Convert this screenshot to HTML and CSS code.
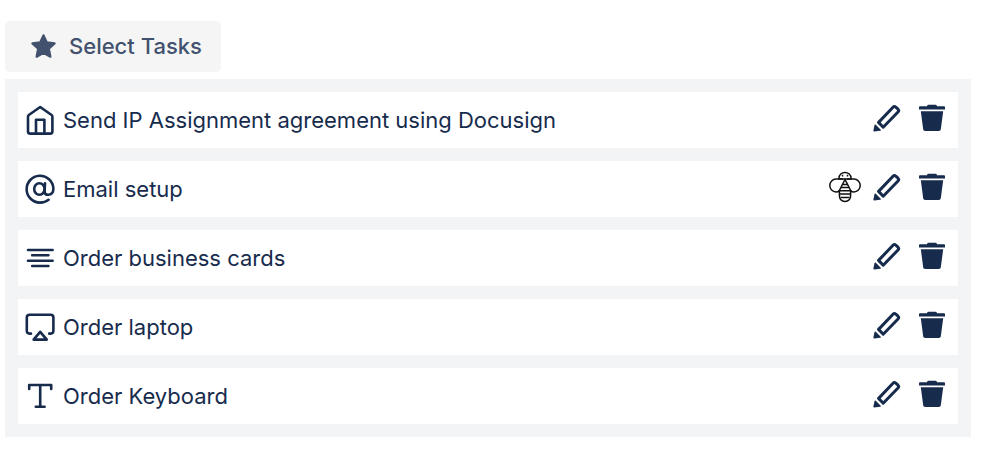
FILE: index.html
```
<!DOCTYPE html>
<html lang="en">
<head>
  <meta charset="UTF-8" />
  <meta name="viewport" content="width=device-width, initial-scale=1.0"/>
  <title>Select Tasks</title>
  <link rel="stylesheet" href="styles.css">
</head>
<body>

  <!-- shared icons -->
  <svg class="sprite" aria-hidden="true">
    <symbol id="edit" viewBox="0 0 28 28">
      <path d="M5.6 18.4 L20 3.2 Q21.4 1.8 22.8 3.2 L25 5.2 Q26.4 6.6 25 8 L10.2 23.2 Z" fill="none" stroke="currentColor" stroke-width="3" stroke-linejoin="round"/>
      <path d="M2.6 20.4 L8.2 26.2 L7 26.8 L1.2 27.6 Q.3 27.6 .4 26.6 L1.6 20.8 Z" fill="currentColor"/>
    </symbol>
    <symbol id="trash" viewBox="0 0 28 28">
      <path d="M2 2.2 H9 Q9.3 .8 10.6 .8 H17.4 Q18.7 .8 19 2.2 H26 Q27 2.2 27 3.2 V5.6 H1 V3.2 Q1 2.2 2 2.2 Z" fill="currentColor"/>
      <path d="M2.8 7.2 H25.2 L22.8 25.2 Q22.5 27 20.8 27 H7.2 Q5.5 27 5.2 25.2 Z" fill="currentColor"/>
    </symbol>
  </svg>

  <button class="select-btn" type="button">
    <svg viewBox="0 0 28 28"><path d="M14 2.5 L17.4 9.8 L25.5 10.8 L19.5 16.3 L21.1 24.5 L14 20.5 L6.9 24.5 L8.5 16.3 L2.5 10.8 L10.6 9.8 Z" fill="currentColor" stroke="currentColor" stroke-width="2.4" stroke-linejoin="round"/></svg>
    Select Tasks
  </button>

  <ul class="task-list">
    <li class="task">
      <svg class="task-icon" viewBox="0 0 30 30">
        <path d="M3 11.6 Q3 10.6 3.8 10 L15.2 2 L26.6 10 Q27.4 10.6 27.4 11.6 V26.5 Q27.4 28.6 25.3 28.6 H5.1 Q3 28.6 3 26.5 Z"/>
        <path d="M11 28.4 V14.8 H19.4 V28.4"/>
      </svg>
      <span class="task-name">Send IP Assignment agreement using Docusign</span>
      <div class="actions">
        <button type="button" aria-label="Edit"><svg><use href="#edit"/></svg></button>
        <button type="button" aria-label="Delete"><svg><use href="#trash"/></svg></button>
      </div>
    </li>
    <li class="task">
      <svg class="task-icon" viewBox="0 0 30 30">
        <ellipse cx="14.4" cy="15" rx="5.2" ry="5.8"/>
        <path d="M20 9.2 L19.6 17.4 Q19.6 20.8 23 20.8 Q28.4 20.3 28.4 14.4 A13.4 13.4 0 1 0 15 28.6 Q20 28.6 23.6 25.8"/>
      </svg>
      <span class="task-name">Email setup</span>
      <div class="actions">
        <svg class="bee" viewBox="0 0 32 32">
          <path d="M10 8 V7 A6 5.6 0 0 1 22 7 V8 Z"/>
          <path d="M14 8 H7 A6.2 6.5 0 0 0 7 21 Q9.4 21 10.4 19.5 M18 8 H25 A6.2 6.5 0 0 1 25 21 Q22.6 21 21.6 19.5"/>
          <path d="M16 8.5 L10.4 19.5 V24.5 Q10.4 30.4 16 30.4 Q21.6 30.4 21.6 24.5 V19.5 Z"/>
          <path d="M13.5 13.5 H18.5 M12 16.6 H20 M10.5 19.8 H21.5 M10.5 23 H21.5 M11.5 26.4 H20.5"/>
          <path d="M13.5 3.8 V5.4 M18.5 3.8 V5.4"/>
        </svg>
        <button type="button" aria-label="Edit"><svg><use href="#edit"/></svg></button>
        <button type="button" aria-label="Delete"><svg><use href="#trash"/></svg></button>
      </div>
    </li>
    <li class="task">
      <svg class="task-icon" viewBox="0 0 30 30">
        <path d="M3 7 H27.6 M7.2 12.3 H23.4 M3 17.7 H27.6 M7.2 23 H23.4"/>
      </svg>
      <span class="task-name">Order business cards</span>
      <div class="actions">
        <button type="button" aria-label="Edit"><svg><use href="#edit"/></svg></button>
        <button type="button" aria-label="Delete"><svg><use href="#trash"/></svg></button>
      </div>
    </li>
    <li class="task">
      <svg class="task-icon" viewBox="0 0 30 30">
        <path d="M6 21.6 H4.6 Q1.8 21.6 1.8 18.8 V5.6 Q1.8 2.8 4.6 2.8 H25.6 Q28.4 2.8 28.4 5.6 V18.8 Q28.4 21.6 25.6 21.6 H24.2"/>
        <path d="M15.2 19.8 L21.8 27.6 H8.6 Z"/>
      </svg>
      <span class="task-name">Order laptop</span>
      <div class="actions">
        <button type="button" aria-label="Edit"><svg><use href="#edit"/></svg></button>
        <button type="button" aria-label="Delete"><svg><use href="#trash"/></svg></button>
      </div>
    </li>
    <li class="task">
      <svg class="task-icon" viewBox="0 0 30 30">
        <path d="M4.2 8 V4 H26.2 V8 M15.2 4 V25.8 M10.8 25.8 H19.6"/>
      </svg>
      <span class="task-name">Order Keyboard</span>
      <div class="actions">
        <button type="button" aria-label="Edit"><svg><use href="#edit"/></svg></button>
        <button type="button" aria-label="Delete"><svg><use href="#trash"/></svg></button>
      </div>
    </li>
  </ul>

</body>
</html>
```
FILE: styles.css
```
body {
  font-family: Inter, "Liberation Sans", sans-serif;
  background-color: #fff;
  color: #172b4d;
  margin: 0;
  padding: 21px 27px 16px 5px;
}
button {
  font: inherit;
  border: none;
  cursor: pointer;
}
.sprite {
  display: none;
}
.select-btn {
  display: flex;
  align-items: center;
  gap: 12px;
  padding: 12px 19px 12px 25px;
  background-color: #f5f5f5;
  color: #42526e;
  border-radius: 5px;
  font-size: 22px;
  font-weight: 500;
  line-height: 27px;
}
.select-btn svg {
  width: 27px;
  height: 27px;
}
.task-list {
  display: flex;
  flex-direction: column;
  gap: 13px;
  list-style: none;
  margin: 7px 0 0;
  padding: 13px;
  background-color: #f3f4f6;
}
.task {
  display: flex;
  align-items: center;
  padding: 13px 12px 13px 7px;
  background-color: #fff;
}
.task-icon {
  width: 30px;
  height: 30px;
  margin-right: 8px;
  fill: none;
  stroke: currentColor;
  stroke-width: 2.6;
  stroke-linecap: round;
  stroke-linejoin: round;
}
.task-name {
  flex: 1;
  font-size: 22px;
  line-height: 30px;
}
.actions {
  display: flex;
  align-items: center;
  height: 30px;
  padding-bottom: 4px;
  box-sizing: border-box;
}
.actions button {
  display: flex;
  margin-left: 17px;
  padding: 0;
  background: none;
  color: #172b4d;
}
.actions button svg {
  width: 28px;
  height: 28px;
}
.bee {
  width: 32px;
  height: 32px;
  margin-right: -5px;
  fill: none;
  stroke: #111;
  stroke-width: 1.5;
}
```
